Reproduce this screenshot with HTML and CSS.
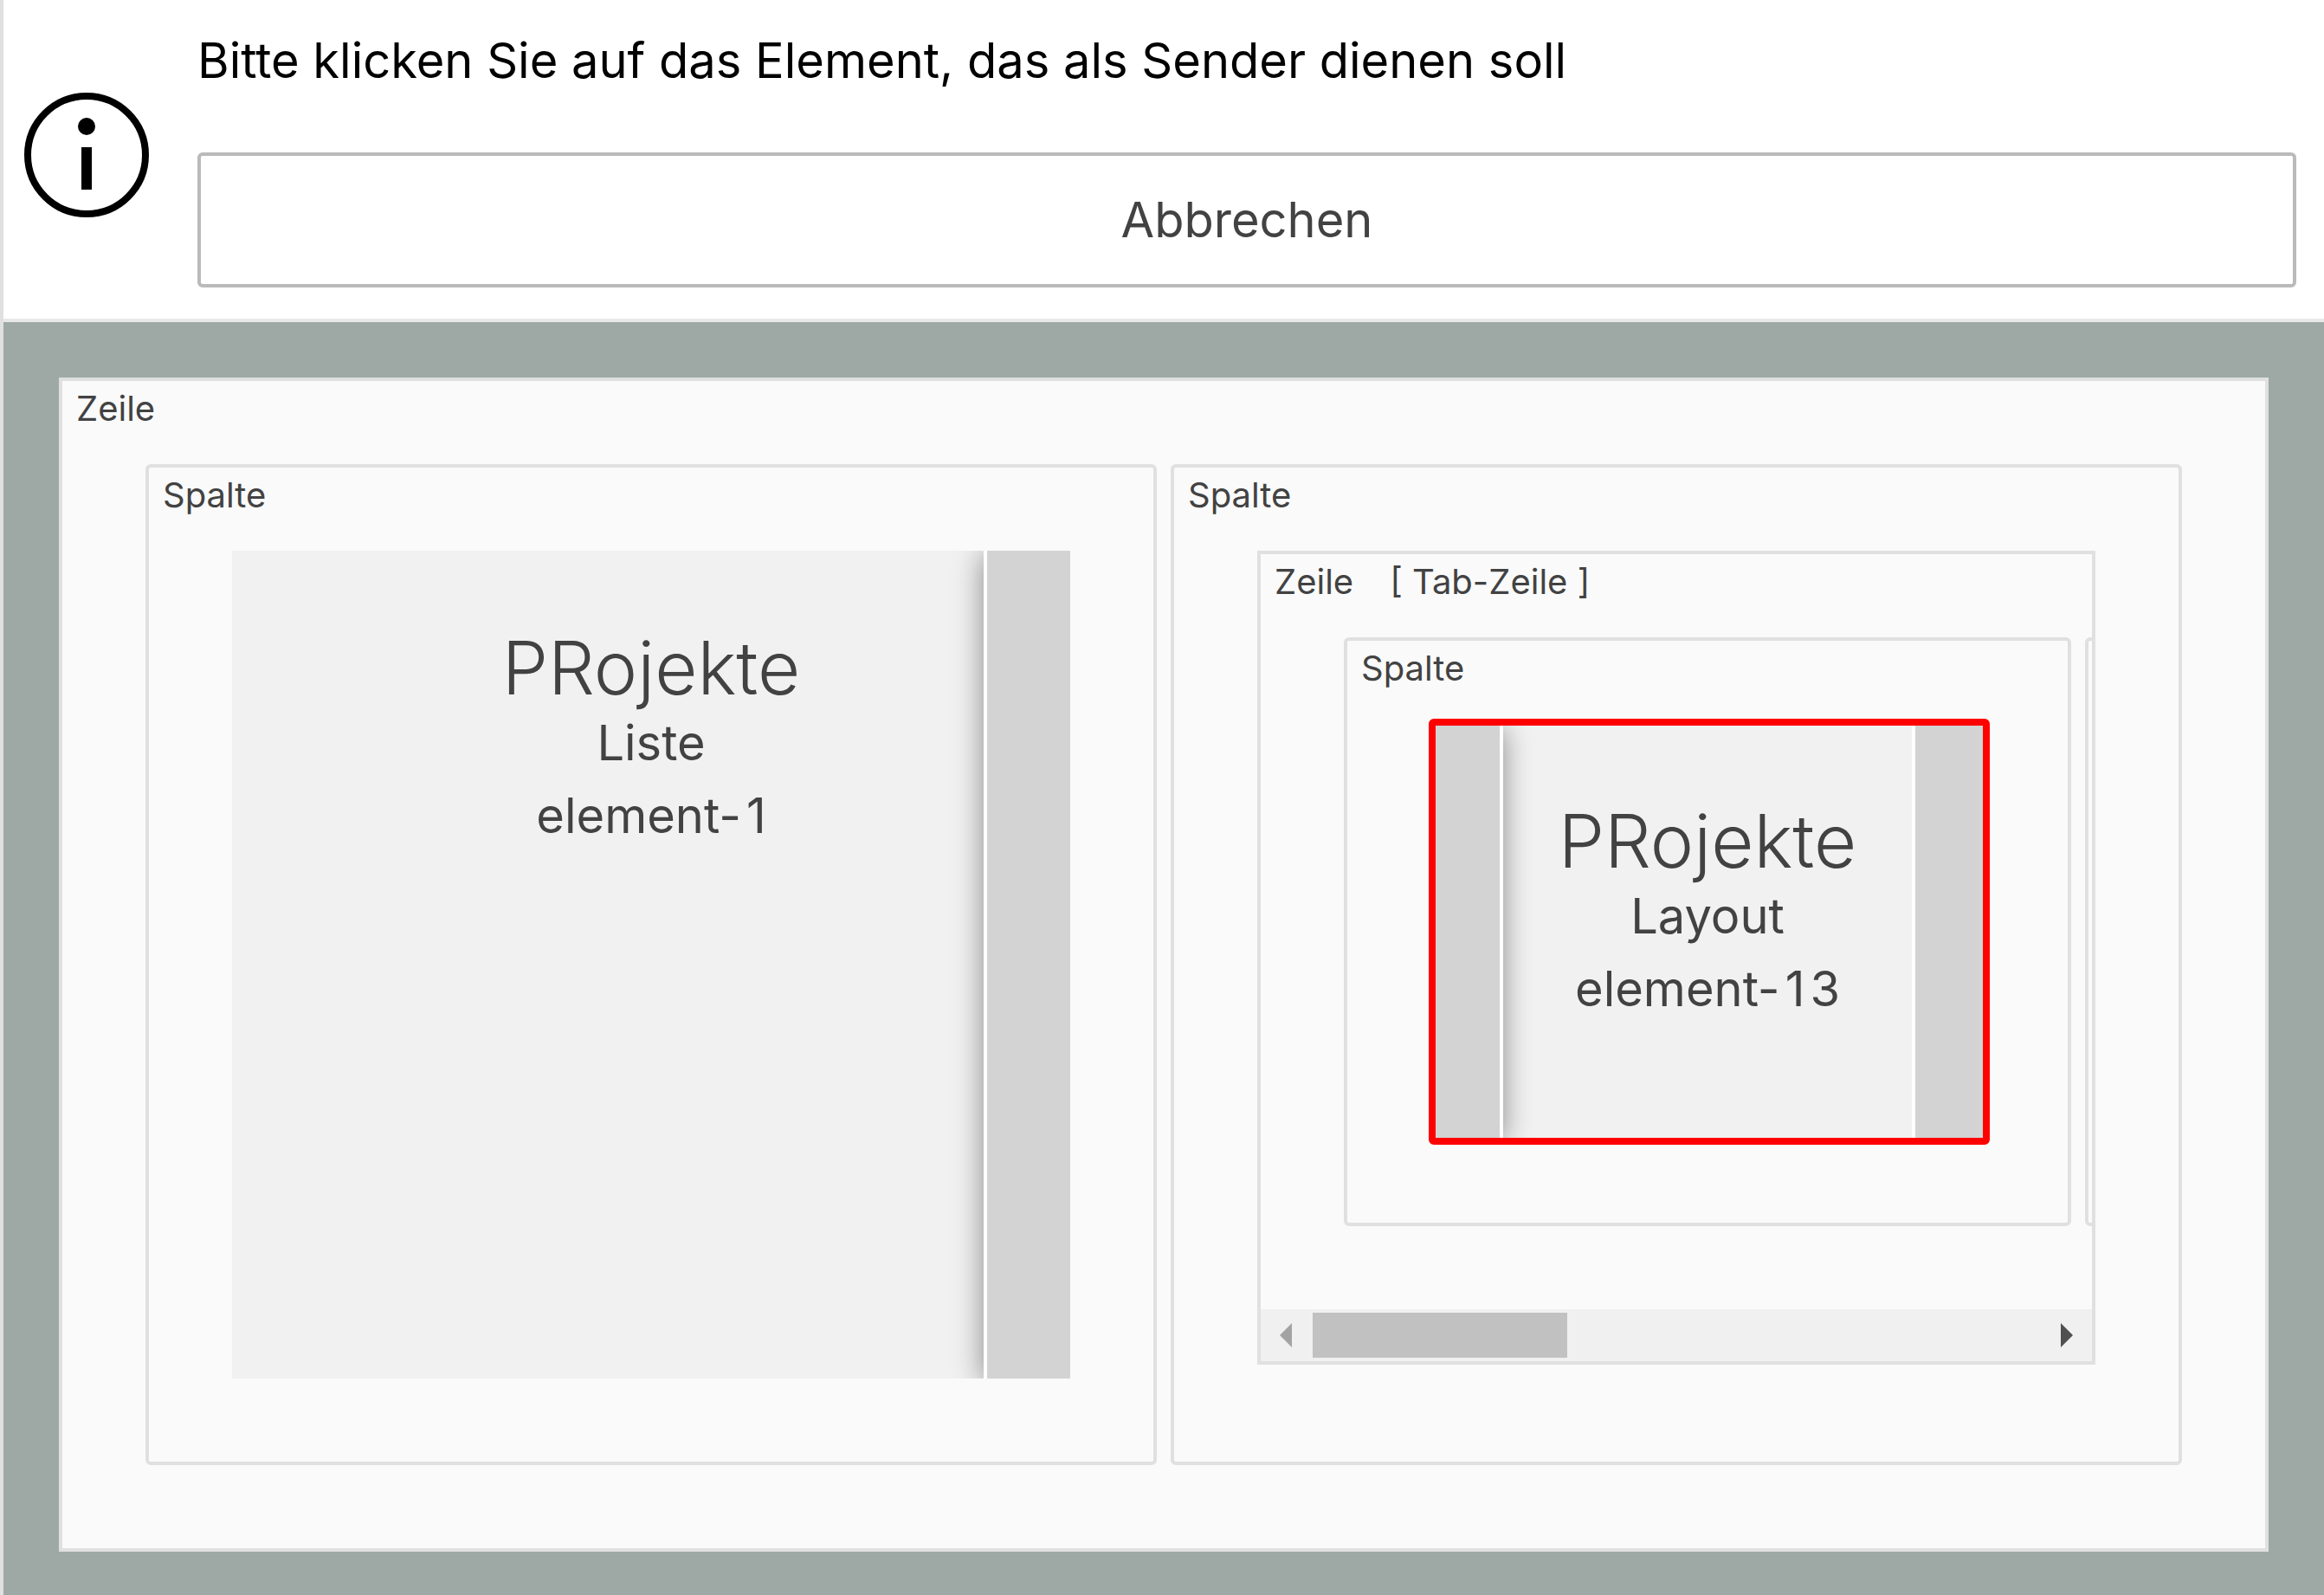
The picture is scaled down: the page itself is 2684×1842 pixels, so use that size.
FILE: index.html
```html
<!DOCTYPE html>
<html lang="de">
<head>
<meta charset="utf-8">
<meta name="viewport" content="width=device-width, initial-scale=1">
<title>Sender auswählen</title>
<link rel="stylesheet" href="styles.css">
</head>
<body>
<header class="notice">
  <svg class="notice-icon" viewBox="0 0 144 144" aria-hidden="true">
    <circle cx="72" cy="71" r="68" fill="none" stroke="currentColor" stroke-width="8"/>
    <circle cx="72" cy="38" r="10" fill="currentColor"/>
    <path d="M66 62h12v49H66z" fill="currentColor"/>
  </svg>
  <div class="notice-body">
    <p class="notice-text">Bitte klicken Sie auf das Element, das als Sender dienen soll</p>
    <button class="cancel" type="button">Abbrechen</button>
  </div>
</header>
<main class="canvas">
  <section class="row">
    <h2 class="label">Zeile</h2>
    <div class="columns">
      <section class="column">
        <h3 class="label">Spalte</h3>
        <article class="element">
          <div class="content content-wide">
            <h4 class="title">PRojekte</h4>
            <p class="line">Liste</p>
            <p class="line">element-<span class="number">1</span></p>
          </div>
          <div class="side side-right raised"></div>
        </article>
      </section>
      <section class="column">
        <h3 class="label">Spalte</h3>
        <section class="row row-tabs">
          <h4 class="label"><span>Zeile</span><span>[ Tab-Zeile ]</span></h4>
          <div class="tabs">
            <section class="column column-tab">
              <h5 class="label">Spalte</h5>
              <article class="element selected">
                <div class="side side-left raised"></div>
                <div class="content">
                  <h6 class="title">PRojekte</h6>
                  <p class="line">Layout</p>
                  <p class="line">element-<span class="number">1</span><span class="number">3</span></p>
                </div>
                <div class="side side-right"></div>
              </article>
            </section>
            <section class="column column-tab"></section>
          </div>
          <div class="scrollbar">
            <svg class="arrow arrow-off" viewBox="0 0 14 28" aria-hidden="true"><path d="M14 0v28L0 14z" fill="currentColor"/></svg>
            <div class="track"><div class="thumb"></div></div>
            <svg class="arrow" viewBox="0 0 14 28" aria-hidden="true"><path d="M0 0v28l14-14z" fill="currentColor"/></svg>
          </div>
        </section>
      </section>
    </div>
  </section>
</main>
</body>
</html>
```
FILE: styles.css
```css
* {
  box-sizing: border-box;
}

body {
  margin: 0;
  min-height: 100vh;
  display: flex;
  flex-direction: column;
  border-left: 4px solid #e0e0e0;
  background: #fff;
  color: #424242;
  font-family: Inter, "Liberation Sans", sans-serif;
  font-size: 56px;
}

h2, h3, h4, h5, h6, p {
  margin: 0;
  font-weight: 400;
}

.notice {
  display: flex;
  align-items: center;
  gap: 56px;
  padding: 28px 32px 36px 24px;
  border-bottom: 4px solid #e8e8e8;
  color: #000;
}

.notice-icon {
  flex: none;
  width: 144px;
  height: 144px;
  overflow: visible;
}

.notice-body {
  flex: 1;
  display: flex;
  flex-direction: column;
  gap: 64px;
}

.notice-text {
  line-height: 84px;
}

.cancel {
  height: 156px;
  padding: 0;
  border: 4px solid #bababa;
  border-radius: 6px;
  background: #fff;
  color: #424242;
  font: inherit;
}

.canvas {
  flex: 1;
  display: flex;
  flex-direction: column;
  padding: 64px 64px 50px;
  background: #9ea9a6;
}

.row {
  flex: 1;
  display: flex;
  flex-direction: column;
  padding: 0 96px 96px;
  border: 4px solid #e0e0e0;
  background: #fafafa;
}

.label {
  display: flex;
  gap: 42px;
  height: 96px;
  padding: 2px 0 0 16px;
  font-size: 40px;
  line-height: 60px;
  white-space: nowrap;
}

.row > .label,
.column > .label {
  margin-left: -96px;
}

.columns {
  flex: 1;
  display: grid;
  grid-template-columns: 1fr 1fr;
  gap: 16px;
}

.column {
  display: flex;
  flex-direction: column;
  min-width: 0;
  padding: 0 96px 96px;
  border: 4px solid #e0e0e0;
  border-radius: 6px;
}

.element {
  flex: 1;
  display: flex;
  overflow: hidden;
  background: #f1f1f1;
}

.content {
  flex: 1;
  padding-top: 86px;
  text-align: center;
}

.content-wide {
  padding-left: 100px;
}

.title {
  font-size: 85px;
  font-weight: 300;
  line-height: 100px;
  margin-bottom: -6px;
}

.line {
  line-height: 84px;
}

.number {
  padding-left: 6px;
}

.side {
  flex: none;
  background: #d3d3d3;
}

.side-left {
  width: 78px;
  border-right: 4px solid #fff;
}

.side-right {
  width: 100px;
  border-left: 4px solid #fff;
}

.raised {
  box-shadow: 0 4px 32px rgba(0, 0, 0, 0.44);
}

.row-tabs {
  flex: none;
  padding: 0;
  margin-bottom: 16px;
}

.row-tabs > .label {
  margin-left: 0;
}

.tabs {
  display: flex;
  gap: 16px;
  padding: 0 0 96px 96px;
  overflow: hidden;
}

.column-tab {
  flex: 0 0 calc(100% - 24px);
  padding: 0 90px 90px 94px;
}

.column-tab > .label {
  height: 90px;
  margin-left: -94px;
}

.selected {
  flex: none;
  min-height: 492px;
  border: 8px solid #f00;
  border-radius: 6px;
}

.selected .content {
  padding-top: 84px;
}

.selected .side-right {
  width: 82px;
}

.scrollbar {
  display: flex;
  align-items: center;
  gap: 24px;
  height: 60px;
  padding: 0 22px;
  background: #f0f0f0;
  color: #505050;
}

.arrow {
  width: 14px;
  height: 28px;
}

.arrow-off {
  color: #a3a3a3;
}

.track {
  flex: 1;
}

.thumb {
  width: 35%;
  height: 52px;
  background: #c1c1c1;
}
```
